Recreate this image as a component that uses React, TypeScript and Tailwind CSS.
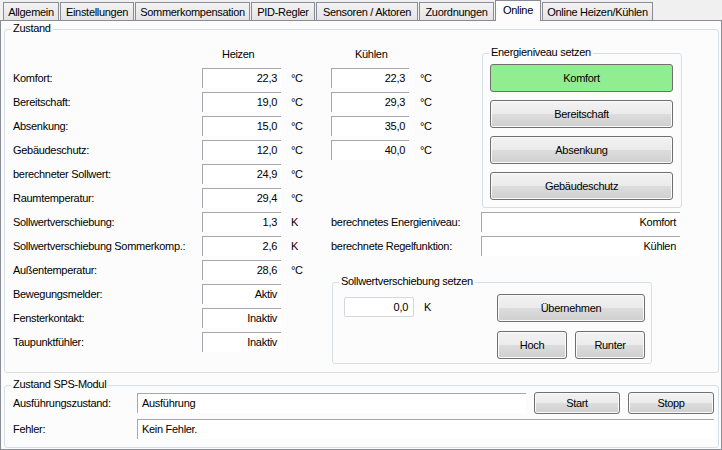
import type { ReactNode } from "react";

const tabs = [
  { label: "Allgemein", w: "w-[56px]" },
  { label: "Einstellungen", w: "w-[74px]" },
  { label: "Sommerkompensation", w: "w-[115px]" },
  { label: "PID-Regler", w: "w-[64px]" },
  { label: "Sensoren / Aktoren", w: "w-[102px]" },
  { label: "Zuordnungen", w: "w-[75px]" },
  { label: "Online", w: "w-[46px]", active: true },
  { label: "Online Heizen/Kühlen", w: "w-[111px]" },
];

const heizen = [
  { label: "Komfort:", value: "22,3", unit: "°C" },
  { label: "Bereitschaft:", value: "19,0", unit: "°C" },
  { label: "Absenkung:", value: "15,0", unit: "°C" },
  { label: "Gebäudeschutz:", value: "12,0", unit: "°C" },
  { label: "berechneter Sollwert:", value: "24,9", unit: "°C" },
  { label: "Raumtemperatur:", value: "29,4", unit: "°C" },
  { label: "Sollwertverschiebung:", value: "1,3", unit: "K" },
  { label: "Sollwertverschiebung Sommerkomp.:", value: "2,6", unit: "K" },
  { label: "Außentemperatur:", value: "28,6", unit: "°C" },
  { label: "Bewegungsmelder:", value: "Aktiv", unit: "" },
  { label: "Fensterkontakt:", value: "Inaktiv", unit: "" },
  { label: "Taupunktfühler:", value: "Inaktiv", unit: "" },
];

const kuehlen = ["22,3", "29,3", "35,0", "40,0"];

function Group({ title, className, children }: { title: string; className: string; children: ReactNode }) {
  return (
    <div className={`relative border border-[#d5dfe5] rounded-[3px] ${className}`}>
      <span className="absolute left-[6px] top-[-8px] px-[2px] bg-[#fcfcfc] leading-[13px] whitespace-nowrap">{title}</span>
      {children}
    </div>
  );
}

function Btn({ children, className, green }: { children: ReactNode; className: string; green?: boolean }) {
  return (
    <div
      className={`flex items-center justify-center border border-[#707070] rounded-[3px] shadow-[inset_0_0_0_1px_#fafafa] ${
        green ? "bg-[#90ee90] shadow-none" : "bg-[linear-gradient(#f2f2f2,#ebebeb_50%,#dddddd_50%,#cfcfcf)]"
      } ${className}`}
    >
      {children}
    </div>
  );
}

function Box({ children, className, left }: { children: ReactNode; className: string; left?: boolean }) {
  return (
    <div
      className={`h-[20px] flex items-center bg-white border-t border-l border-[#a5a7ad] ${
        left ? "justify-start pl-[4px]" : "justify-end pr-[4px]"
      } ${className}`}
    >
      {children}
    </div>
  );
}

export default function App() {
  return (
    <div className="w-[722px] h-[450px] flex flex-col bg-[#f0f0f0] text-black text-[11px] leading-[13px] tracking-[-0.3px] font-['Liberation_Sans',Arial,sans-serif] overflow-hidden">
      {/* tab strip */}
      <div className="h-[20px] flex items-end gap-px pl-[3px] relative z-10">
        {tabs.map((t) =>
          t.active ? (
            <div
              key={t.label}
              className={`${t.w} h-[21px] mb-[-1px] flex justify-center pt-[3px] bg-[#fcfcfc] border-t border-l border-r border-[#898c95] whitespace-nowrap`}
            >
              {t.label}
            </div>
          ) : (
            <div
              key={t.label}
              className={`${t.w} h-[18px] flex items-center justify-center pt-[1px] bg-[linear-gradient(#f3f3f3,#e4e4e4)] border-t border-l border-r border-[#898c95] whitespace-nowrap`}
            >
              {t.label}
            </div>
          )
        )}
      </div>

      {/* tab page */}
      <div className="flex-1 border border-[#898c95] bg-[#fcfcfc] pl-[3px] pr-[2px] pt-[8px]">
        <Group title="Zustand" className="h-[344px]">
          <div className="flex pl-[8px]">
            {/* Heizen */}
            <div className="w-[318px] flex flex-col">
              <div className="h-[36px] pt-[18px] pl-[209px]">Heizen</div>
              {heizen.map((r) => (
                <div key={r.label} className="h-[24px] flex items-center">
                  <span className="w-[189px] whitespace-nowrap">{r.label}</span>
                  <Box className="w-[79px]">{r.value}</Box>
                  <span className="ml-[10px]">{r.unit}</span>
                </div>
              ))}
            </div>

            {/* right side */}
            <div className="w-[387px] flex flex-col">
              <div className="h-[180px] flex">
                <div className="w-[151px] flex flex-col">
                  <div className="h-[36px] pt-[18px] pl-[24px]">Kühlen</div>
                  {kuehlen.map((v) => (
                    <div key={v} className="h-[24px] flex items-center">
                      <Box className="w-[78px]">{v}</Box>
                      <span className="ml-[11px]">°C</span>
                    </div>
                  ))}
                </div>
                <Group title="Energieniveau setzen" className="w-[200px] h-[155px] mt-[23px]">
                  <div className="flex flex-col gap-[8px] pl-[7px] pt-[10px]">
                    <Btn green className="w-[183px] h-[28px]">Komfort</Btn>
                    <Btn className="w-[183px] h-[28px]">Bereitschaft</Btn>
                    <Btn className="w-[183px] h-[28px]">Absenkung</Btn>
                    <Btn className="w-[183px] h-[28px]">Gebäudeschutz</Btn>
                  </div>
                </Group>
              </div>

              <div className="h-[24px] flex items-center">
                <span className="w-[150px] whitespace-nowrap">berechnetes Energieniveau:</span>
                <Box className="w-[199px]">Komfort</Box>
              </div>
              <div className="h-[24px] flex items-center">
                <span className="w-[150px] whitespace-nowrap">berechnete Regelfunktion:</span>
                <Box className="w-[199px]">Kühlen</Box>
              </div>

              <Group title="Sollwertverschiebung setzen" className="w-[320px] h-[82px] mt-[24px] ml-[1px]">
                <div className="flex pl-[11px] pt-[11px]">
                  <div className="w-[153px] flex items-start">
                    <div className="mt-[3px] w-[70px] h-[20px] flex items-center justify-end pr-[5px] bg-white border border-[#d3d6dc] rounded-[2px]">
                      0,0
                    </div>
                    <span className="ml-[10px] mt-[7px]">K</span>
                  </div>
                  <div className="flex flex-col gap-[9px]">
                    <Btn className="w-[148px] h-[28px]">Übernehmen</Btn>
                    <div className="flex gap-[8px]">
                      <Btn className="w-[70px] h-[28px]">Hoch</Btn>
                      <Btn className="w-[70px] h-[28px]">Runter</Btn>
                    </div>
                  </div>
                </div>
              </Group>
            </div>
          </div>
        </Group>

        <Group title="Zustand SPS-Modul" className="h-[63px] mt-[12px]">
          <div className="flex flex-col gap-[2px] pl-[8px] pr-[4px] pt-[5px]">
            <div className="h-[24px] flex items-center">
              <span className="w-[124px] whitespace-nowrap">Ausführungszustand:</span>
              <Box left className="flex-1">Ausführung</Box>
              <Btn className="ml-[8px] w-[86px] h-[22px]">Start</Btn>
              <Btn className="ml-[8px] w-[86px] h-[22px]">Stopp</Btn>
            </div>
            <div className="h-[24px] flex items-center">
              <span className="w-[124px] whitespace-nowrap">Fehler:</span>
              <Box left className="flex-1">Kein Fehler.</Box>
            </div>
          </div>
        </Group>
      </div>
    </div>
  );
}
